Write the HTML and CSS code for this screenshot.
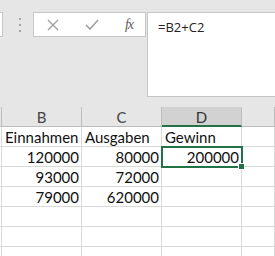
FILE: index.html
```html
<!DOCTYPE html>
<html lang="de">
  <head>
    <meta charset="UTF-8" />
    <meta name="viewport" content="width=device-width, initial-scale=1.0" />
    <link rel="stylesheet" href="styles.css">
    <title>Tabelle</title>
  </head>
  <body>
    <div class="formula-bar">
      <div class="name-box"></div>
      <svg class="grip" width="3" height="16" viewBox="0 0 3 16">
        <rect x="1" y="1" width="2" height="2" fill="#a6a6a6" />
        <rect x="1" y="7" width="2" height="2" fill="#a6a6a6" />
        <rect x="1" y="13" width="2" height="2" fill="#a6a6a6" />
      </svg>
      <div class="fx-buttons">
        <svg class="icon" width="12" height="12" viewBox="0 0 12 12">
          <path d="M1 1 L11 11 M11 1 L1 11" stroke="#a0a0a0" stroke-width="1.4" fill="none" />
        </svg>
        <svg class="icon" width="14" height="12" viewBox="0 0 14 12">
          <path d="M1 6 L5 10 L13 1" stroke="#a0a0a0" stroke-width="1.6" fill="none" />
        </svg>
        <span class="fx">fx</span>
      </div>
      <div class="formula-input">=B2+C2</div>
    </div>

    <div class="sheet">
      <div class="head edge"></div>
      <div class="head">B</div>
      <div class="head">C</div>
      <div class="head active">D</div>
      <div class="head"></div>

      <div class="cell edge"></div>
      <div class="cell">Einnahmen</div>
      <div class="cell">Ausgaben</div>
      <div class="cell">Gewinn</div>
      <div class="cell"></div>

      <div class="cell edge"></div>
      <div class="cell num">120000</div>
      <div class="cell num">80000</div>
      <div class="cell num selected">200000<span class="handle"></span></div>
      <div class="cell"></div>

      <div class="cell edge"></div>
      <div class="cell num">93000</div>
      <div class="cell num">72000</div>
      <div class="cell"></div>
      <div class="cell"></div>

      <div class="cell edge"></div>
      <div class="cell num">79000</div>
      <div class="cell num">620000</div>
      <div class="cell"></div>
      <div class="cell"></div>

      <div class="cell edge"></div>
      <div class="cell"></div>
      <div class="cell"></div>
      <div class="cell"></div>
      <div class="cell"></div>

      <div class="cell edge"></div>
      <div class="cell"></div>
      <div class="cell"></div>
      <div class="cell"></div>
      <div class="cell"></div>

      <div class="cell edge"></div>
      <div class="cell"></div>
      <div class="cell"></div>
      <div class="cell"></div>
      <div class="cell"></div>
    </div>
  </body>
</html>
```

FILE: styles.css
```css
body {
  margin: 0;
  background: #e6e6e6;
  font-family: "Open Sans", "Liberation Sans", sans-serif;
  overflow: hidden;
}

.formula-bar {
  display: flex;
  align-items: flex-start;
  padding-top: 12px;
  height: 85px;
  border-top: 2px solid #d9d9d9;
  box-sizing: content-box;
  margin-top: -2px;
}

.name-box {
  width: 2px;
  height: 23px;
  background: #fff;
  border: 1px solid #c6c6c6;
  border-left: none;
}

.grip {
  margin: 5px 0 0 15px;
}

.fx-buttons {
  display: flex;
  align-items: center;
  justify-content: space-between;
  box-sizing: border-box;
  width: 113px;
  height: 25px;
  margin-left: 12px;
  padding: 0 12px 0 13px;
  background: #fff;
  border: 1px solid #c6c6c6;
}

.fx {
  font-family: "Liberation Serif", serif;
  font-style: italic;
  font-size: 14px;
  color: #5a5a5a;
  letter-spacing: -1px;
}

.formula-input {
  flex: 1;
  box-sizing: border-box;
  height: 85px;
  margin-left: 1px;
  padding: 4px 0 0 10px;
  background: #fff;
  border: 1px solid #c6c6c6;
  border-right: none;
  font-size: 13px;
  line-height: 20px;
  color: #222;
}

.sheet {
  display: grid;
  grid-template-columns: 2px 80px 80px 80px 1fr;
  grid-auto-rows: 20px;
  margin-top: 10px;
  background: #fff;
  font-family: Lato, "Open Sans", sans-serif;
  font-size: 15px;
  color: #111;
}

.head {
  background: #e6e6e6;
  border-right: 1px solid #bdbdbd;
  border-bottom: 1px solid #bdbdbd;
  text-align: center;
  line-height: 20px;
  color: #444;
}

.head.active {
  background: #d2d2d2;
  border-bottom: 2px solid #217346;
  color: #333;
}

.cell {
  border-right: 1px solid #d9d9d9;
  border-bottom: 1px solid #d9d9d9;
  padding: 0 2px 0 3px;
  line-height: 20px;
  white-space: nowrap;
}

.cell.edge {
  padding: 0;
}

.num {
  text-align: right;
}

.selected {
  position: relative;
  outline: 2px solid #217346;
  outline-offset: -1px;
}

.handle {
  position: absolute;
  right: -4px;
  bottom: -4px;
  width: 5px;
  height: 5px;
  background: #217346;
  border: 1px solid #fff;
}
```
